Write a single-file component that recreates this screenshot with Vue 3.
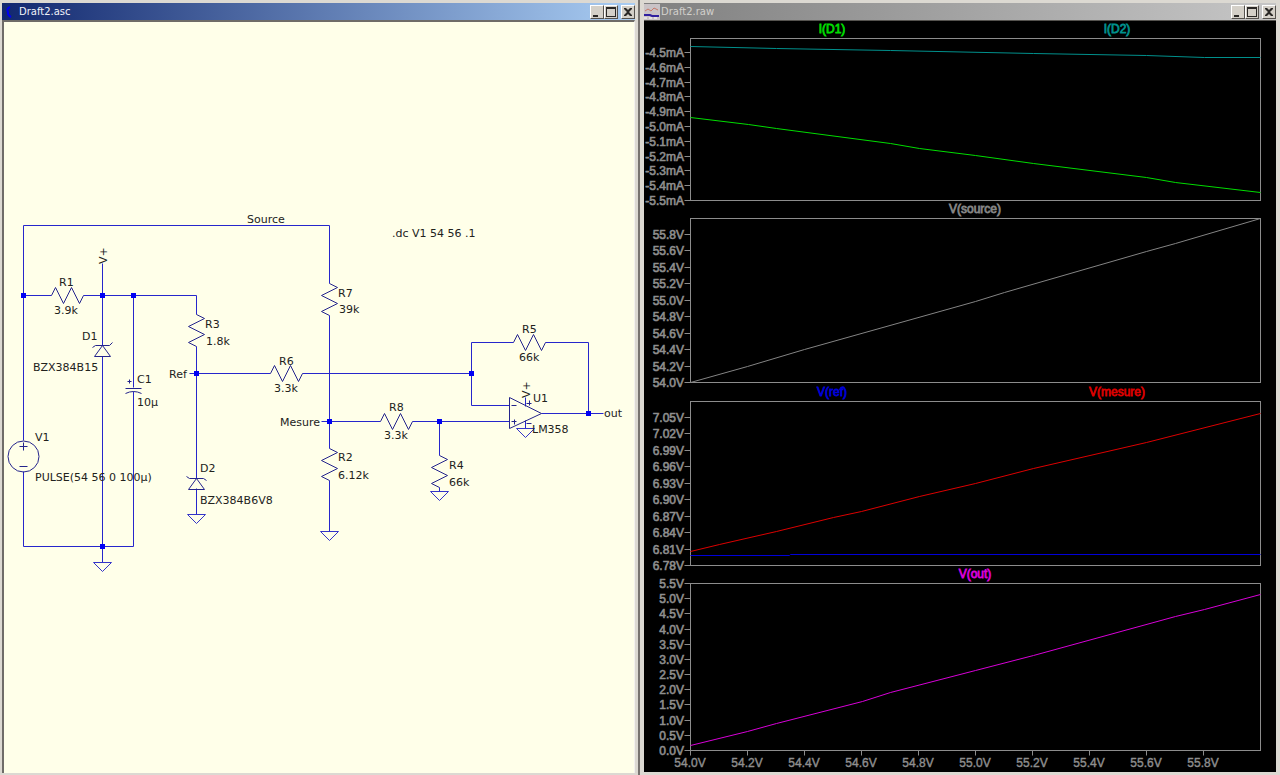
<script setup>
const resistors = [
  { id: 'R1', x: 67, y: 296, v: false, name: [59, 286], value: [54, 314, '3.9k'] },
  { id: 'R3', x: 196, y: 331, v: true, name: [205, 328], value: [206, 345, '1.8k'] },
  { id: 'R6', x: 286, y: 374, v: false, name: [279, 365], value: [274, 392, '3.3k'] },
  { id: 'R7', x: 329, y: 300, v: true, name: [338, 297], value: [339, 313, '39k'] },
  { id: 'R8', x: 396, y: 422, v: false, name: [389, 411], value: [384, 439, '3.3k'] },
  { id: 'R2', x: 329, y: 465, v: true, name: [338, 461], value: [338, 479, '6.12k'] },
  { id: 'R4', x: 439, y: 472, v: true, name: [449, 469], value: [449, 486, '66k'] },
  { id: 'R5', x: 529, y: 343, v: false, name: [522, 333], value: [519, 361, '66k'] },
]
const labels = [
  [247, 223, 'Source'], [392, 237, '.dc V1 54 56 .1'], [82, 340, 'D1'], [33, 371, 'BZX384B15'],
  [137, 383, 'C1'], [137, 406, '10µ'], [35, 441, 'V1'], [35, 481, 'PULSE(54 56 0 100µ)'],
  [169, 378, 'Ref'], [200, 472, 'D2'], [200, 504, 'BZX384B6V8'], [280, 426, 'Mesure'],
  [533, 402, 'U1'], [532, 433, 'LM358'], [604, 417, 'out'],
]
const grounds = [[102, 563], [196, 515], [329, 532], [439, 492], [525, 429]]
const nodes = [[23, 296], [102, 296], [133, 296], [196, 374], [102, 547], [329, 422], [439, 422], [471, 374], [588, 414]]
const wires = [
  'M23 441V226H329V284', 'M23 296H51', 'M83 296H196V315', 'M102 264V346', 'M102 357V563',
  'M133 296V388', 'M133 392V547H23V472', 'M196 347V479', 'M196 489V515', 'M189 374H270', 'M302 374H471',
  'M329 316V449', 'M321 422H380', 'M329 481V532', 'M412 422H509', 'M439 422V456', 'M439 488V492',
  'M513 343H471V406H509', 'M545 343H588V414', 'M541 414H603', 'M525 398V407', 'M525 421V429',
]
const plots = [
  { top: 38, bottom: 200, first: 52, step: 148 / 10,
    ticks: ['-4.5mA', '-4.6mA', '-4.7mA', '-4.8mA', '-4.9mA', '-5.0mA', '-5.1mA', '-5.2mA', '-5.3mA', '-5.4mA', '-5.5mA'],
    traces: [
      { name: 'I(D1)', x: 832, color: '#00dc00', pts: '690,117 748,124 776,128 890,143 919,148 975,155 1033,163 1146,177 1175,182 1260,192' },
      { name: 'I(D2)', x: 1117, color: '#00908c', pts: '690,46 776,48 890,50 1033,53 1146,55 1204,57 1260,57' },
    ] },
  { top: 218, bottom: 382, first: 234, step: 148 / 9,
    ticks: ['55.8V', '55.6V', '55.4V', '55.2V', '55.0V', '54.8V', '54.6V', '54.4V', '54.2V', '54.0V'],
    traces: [{ name: 'V(source)', x: 975, color: '#848484', pts: '690,382 747,366 804,349 975,301 1004,292 1146,251 1175,243 1260,218' }] },
  { top: 401, bottom: 565, first: 417, step: 148 / 9,
    ticks: ['7.05V', '7.02V', '6.99V', '6.96V', '6.93V', '6.90V', '6.87V', '6.84V', '6.81V', '6.78V'],
    traces: [
      { name: 'V(ref)', x: 832, color: '#0000d8', pts: '690,555 789,555 790,554 1260,554' },
      { name: 'V(mesure)', x: 1117, color: '#dc0000', pts: '690,551 719,544 776,531 833,517 861,511 919,496 975,483 1033,468 1146,442 1260,413' },
    ] },
  { top: 583, bottom: 750, first: 583, step: 167 / 11,
    ticks: ['5.5V', '5.0V', '4.5V', '4.0V', '3.5V', '3.0V', '2.5V', '2.0V', '1.5V', '1.0V', '0.5V', '0.0V'],
    traces: [{ name: 'V(out)', x: 975, color: '#d800d8', pts: '690,745 747,731 776,723 862,701 890,692 975,670 1033,655 1175,616 1204,609 1260,594' }] },
]
const xTicks = ['54.0V', '54.2V', '54.4V', '54.6V', '54.8V', '55.0V', '55.2V', '55.4V', '55.6V', '55.8V']
const tickY = (p, i) => Math.round(p.first + i * p.step)
const tickX = (i) => Math.round(690 + i * 57)
const controls = [
  { label: 'Minimize', d: 'M2 9H7V11H2Z' },
  { label: 'Maximize', d: 'M1 1H11V11H1ZM2 3V10H10V3Z' },
  { label: 'Close', d: 'M2 2H4L6 4L8 2H10V3L7 6L10 9V10H8L6 8L4 10H2V9L5 6L2 3Z' },
]
</script>

<template>
  <main class="desktop">
    <section class="window left" aria-label="Draft2.asc">
      <header class="titlebar active">
        <svg class="icon" viewBox="0 0 16 16" aria-hidden="true">
          <path d="M8 3Q4 5 6 8L6 10Q7 12 9 13" fill="none" stroke="#0000f0" stroke-width="2" />
        </svg>
        <h1>Draft2.asc</h1>
        <div class="controls">
          <button v-for="c in controls" :key="c.label" type="button" :aria-label="c.label">
            <svg viewBox="0 0 12 12"><path :d="c.d" fill-rule="evenodd" /></svg>
          </button>
        </div>
      </header>
      <div class="screen paper">
        <svg class="drawing schematic" viewBox="4 22 630 751" role="img" aria-label="Schematic">
          <g transform="translate(.5 -.5)">
            <path v-for="w in wires" :key="w" :d="w" class="wire" />
            <path
              v-for="r in resistors" :key="r.id" class="part"
              :transform="`translate(${r.x} ${r.y})`"
              :d="r.v ? 'M0-16L8-12L-8-4L8 4L-8 12L0 16' : 'M-16 0L-12-8L-4 8L4-8L12 8L16 0'"
            />
            <path v-for="g in grounds" :key="g.join()" class="ground" :transform="`translate(${g[0]} ${g[1]})`" d="M-9 0H9L0 9Z" />
            <path class="part" d="M92 348L95 346H109L112 343M102 346L94 357H110Z" />
            <path class="part" d="M186 477L189 479H203L206 481M196 479L188 490H204Z" />
            <path class="part" d="M125 389H141M125 394Q133 390 141 394M127 382H131M129 380V384" />
            <circle class="part" cx="23" cy="457" r="15.5" />
            <path class="part" d="M19 447H27M23 443V451M19 467H27" />
            <path class="part" d="M509 398V429L541 414ZM511 406H516M511 422H516M514 420V425M526 404H531M529 401V406M526 424H531" />
          </g>
          <rect v-for="n in nodes" :key="n.join()" class="node" :x="n[0] - 2" :y="n[1] - 3" width="5" height="5" />
          <template v-for="r in resistors" :key="r.id">
            <text :x="r.name[0]" :y="r.name[1]">{{ r.id }}</text>
            <text :x="r.value[0]" :y="r.value[1]">{{ r.value[2] }}</text>
          </template>
          <text v-for="l in labels" :key="l[2]" :x="l[0]" :y="l[1]">{{ l[2] }}</text>
          <text transform="translate(107 264) rotate(-90)">V+</text>
          <text transform="translate(530 398) rotate(-90)">V+</text>
        </svg>
      </div>
    </section>

    <section class="window right" aria-label="Draft2.raw">
      <header class="titlebar">
        <svg class="icon" viewBox="0 0 16 16" aria-hidden="true">
          <path d="M0 0H16V16H0Z" fill="#c9c3c6" />
          <path d="M1 7L4 5L7 7L10 4L14 6" fill="none" stroke="#c87868" />
          <path d="M0 11H6L8 12H15" fill="none" stroke="#3020a0" stroke-width="2" />
          <path d="M0 14H14" stroke="#fff" stroke-dasharray="3 2" />
        </svg>
        <h1>Draft2.raw</h1>
        <div class="controls">
          <button v-for="c in controls" :key="c.label" type="button" :aria-label="c.label">
            <svg viewBox="0 0 12 12"><path :d="c.d" fill-rule="evenodd" /></svg>
          </button>
        </div>
      </header>
      <div class="screen scope">
        <svg class="drawing waves" viewBox="644 21 632 751" role="img" aria-label="Waveforms">
          <g v-for="p in plots" :key="p.top">
            <g transform="translate(.5 .5)">
              <path
                v-for="(t, i) in p.ticks" :key="t" class="axis"
                :d="`M684 ${tickY(p, i)}H690`"
              />
              <rect class="axis" x="690" :y="p.top" width="570" :height="p.bottom - p.top" />
              <polyline v-for="t in p.traces" :key="t.name" class="trace" :points="t.pts" :stroke="t.color" />
            </g>
            <text v-for="(t, i) in p.ticks" :key="t" class="tick strong" x="684" :y="tickY(p, i) + 5" text-anchor="end">{{ t }}</text>
            <text
              v-for="t in p.traces" :key="t.name" class="name" :x="t.x" :y="p.top - 5"
              :fill="t.color" :stroke="t.color" text-anchor="middle"
            >{{ t.name }}</text>
          </g>
          <g v-for="(t, i) in xTicks" :key="t">
            <path class="axis" :d="`M${tickX(i)} 750v5`" transform="translate(.5 .5)" />
            <text class="tick" :x="tickX(i)" y="767" text-anchor="middle">{{ t }}</text>
          </g>
        </svg>
      </div>
    </section>
  </main>
</template>

<style>
body { margin: 0; background: #d8d5ce; }
</style>

<style scoped>
.desktop {
  display: grid;
  grid-template-columns: 1fr 1fr;
  min-height: 100vh;
  background: #d8d5ce;
}
.window {
  box-sizing: border-box;
  display: flex;
  flex-direction: column;
  min-width: 0;
  background: #dcd9d2;
}
.left {
  padding: 3px 3px 2px 2px;
  border-right: 2px solid #77736f;
}
.right { padding: 3px 4px; }
.titlebar {
  display: flex;
  align-items: center;
  height: 17px;
  background: linear-gradient(90deg, #808080, #c6c6c6);
  color: #d2d0cc;
}
.titlebar.active {
  background: linear-gradient(90deg, #12286f, #a9cdf3);
  color: #f0f2f8;
}
.icon { width: 16px; height: 16px; flex: none; }
h1 {
  flex: 1;
  margin: 0;
  padding-left: 1px;
  font: 400 10px/16px "DejaVu Sans", sans-serif;
}
.controls { display: flex; }
button {
  box-sizing: border-box;
  display: grid;
  place-items: center;
  width: 14px;
  height: 14px;
  padding: 0;
  border: 1px solid;
  border-color: #fff #55524e #55524e #fff;
  background: #d4d0c8;
}
button:last-child { margin-left: 3px; }
button svg { width: 12px; height: 12px; fill: #2a2826; }
.screen { flex: 1; }
.paper {
  border: solid #6f6c68;
  border-width: 2px 1px 0 2px;
  border-right-color: #f4f2ee;
  background: #ffffe9;
}
.scope {
  border-top: 1px solid #55534f;
  background: #000;
}
.drawing { display: block; width: 100%; height: auto; }
.wire, .part, .ground, .axis, .trace { fill: none; stroke-width: 1; }
.wire { stroke: #2626cc; }
.part { stroke: #24248c; }
.ground { stroke: #3434c8; }
.node { fill: #0000f4; }
.schematic text { font: 11px "DejaVu Sans", sans-serif; fill: #22221c; }
.axis { stroke: #8c8c8c; }
.waves text { font: 12px "Liberation Sans", Arial, sans-serif; }
.tick { fill: #8e8e8e; stroke: #8e8e8e; stroke-width: .4px; }
.tick.strong { stroke-width: .6px; }
.name { stroke-width: .8px; }
</style>
